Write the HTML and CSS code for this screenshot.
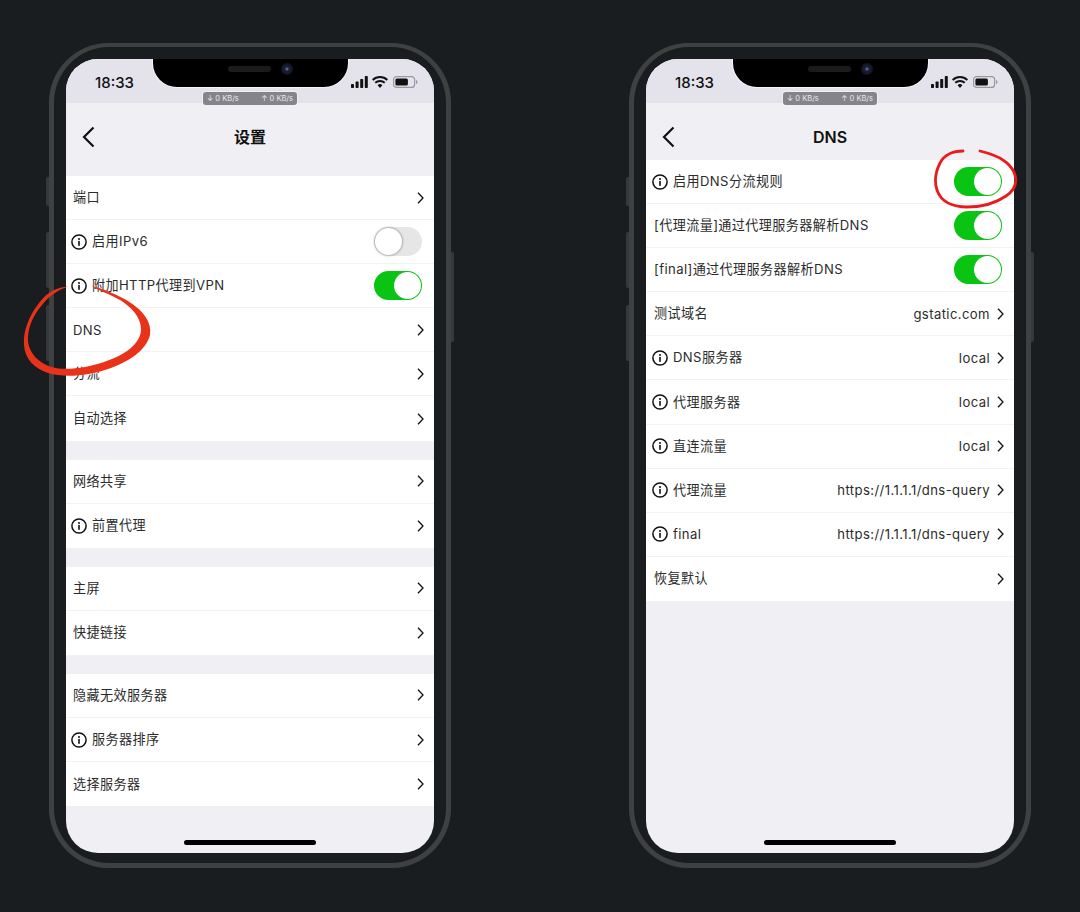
FILE: index.html
```html
<!DOCTYPE html>
<html lang="zh-CN">
<head>
  <meta charset="utf-8" />
  <meta name="viewport" content="width=device-width, initial-scale=1"/>
  <title>设置 / DNS</title>
  <link rel="stylesheet" href="styles.css">
</head>
<body>
  <svg class="defs" width="0" height="0">
    <symbol id="chev" viewBox="0 0 7 12"><path d="M1 .8l5 5.2-5 5.2" fill="none" stroke="#111" stroke-width="1.3"/></symbol>
    <symbol id="back" viewBox="0 0 13 22"><path d="M11.5 1.5L2 11l9.5 9.5" fill="none" stroke="#111" stroke-width="2.2"/></symbol>
    <symbol id="info" viewBox="0 0 16 16">
      <circle cx="8" cy="8" r="7.1" fill="none" stroke="#111" stroke-width="1.5"/>
      <rect x="7.2" y="6.9" width="1.6" height="4.9" fill="#111"/>
      <circle cx="8" cy="4.9" r="1" fill="#111"/>
    </symbol>
    <symbol id="signal" viewBox="0 0 17 12">
      <rect x="0" y="8" width="3" height="4" rx=".7"/><rect x="4.6" y="5.5" width="3" height="6.5" rx=".7"/>
      <rect x="9.2" y="3" width="3" height="9" rx=".7"/><rect x="13.8" y="0" width="3" height="12" rx=".7"/>
    </symbol>
    <symbol id="wifi" viewBox="0 0 16 12">
      <path d="M8 12L5.6 9.3a3.4 3.4 0 0 1 4.8 0zM3.9 7.6L2.6 6.1a7.8 7.8 0 0 1 10.8 0l-1.3 1.5a5.9 5.9 0 0 0-8.2 0zM1.3 4.7L0 3.2a11.7 11.7 0 0 1 16 0l-1.3 1.5a9.8 9.8 0 0 0-13.4 0z"/>
    </symbol>
    <symbol id="battery" viewBox="0 0 25 12">
      <rect x=".6" y=".6" width="21" height="10.8" rx="3" fill="none" stroke="#9a9a9e" stroke-width="1.2"/>
      <rect x="2.4" y="2.4" width="12.5" height="7.2" rx="1.5"/>
      <path d="M23 4v4c.9-.3 1.5-1.1 1.5-2s-.6-1.7-1.5-2z" fill="#9a9a9e"/>
    </symbol>
  </svg>

  <section class="phone">
    <span class="side-btn mute"></span><span class="side-btn vol-up"></span><span class="side-btn vol-down"></span><span class="side-btn power"></span>
    <div class="screen">
      <div class="notch"><span class="speaker"></span><span class="camera"></span></div>
      <div class="speed"><span>↓ 0 KB/s</span><span>↑ 0 KB/s</span></div>
      <header class="status">
        <span class="clock">18:33</span>
        <span class="status-icons">
          <svg class="ic-signal"><use href="#signal"/></svg>
          <svg class="ic-wifi"><use href="#wifi"/></svg>
          <svg class="ic-battery"><use href="#battery"/></svg>
        </span>
      </header>
      <nav class="nav">
        <svg class="ic-back"><use href="#back"/></svg>
        <h1 class="title-cjk">设置</h1>
      </nav>
      <div class="groups first-gap">
        <ul class="group">
          <li class="row"><span class="label">端口</span><svg class="ic-chev"><use href="#chev"/></svg></li>
          <li class="row"><svg class="ic-info"><use href="#info"/></svg><span class="label">启用IPv6</span><i class="toggle"></i></li>
          <li class="row"><svg class="ic-info"><use href="#info"/></svg><span class="label">附加HTTP代理到VPN</span><i class="toggle on"></i></li>
          <li class="row"><span class="label latin">DNS</span><svg class="ic-chev"><use href="#chev"/></svg></li>
          <li class="row"><span class="label">分流</span><svg class="ic-chev"><use href="#chev"/></svg></li>
          <li class="row"><span class="label">自动选择</span><svg class="ic-chev"><use href="#chev"/></svg></li>
        </ul>
        <ul class="group">
          <li class="row"><span class="label">网络共享</span><svg class="ic-chev"><use href="#chev"/></svg></li>
          <li class="row"><svg class="ic-info"><use href="#info"/></svg><span class="label">前置代理</span><svg class="ic-chev"><use href="#chev"/></svg></li>
        </ul>
        <ul class="group">
          <li class="row"><span class="label">主屏</span><svg class="ic-chev"><use href="#chev"/></svg></li>
          <li class="row"><span class="label">快捷链接</span><svg class="ic-chev"><use href="#chev"/></svg></li>
        </ul>
        <ul class="group">
          <li class="row"><span class="label">隐藏无效服务器</span><svg class="ic-chev"><use href="#chev"/></svg></li>
          <li class="row"><svg class="ic-info"><use href="#info"/></svg><span class="label">服务器排序</span><svg class="ic-chev"><use href="#chev"/></svg></li>
          <li class="row"><span class="label">选择服务器</span><svg class="ic-chev"><use href="#chev"/></svg></li>
        </ul>
      </div>
      <span class="home-bar"></span>
    </div>
  </section>

  <section class="phone">
    <span class="side-btn mute"></span><span class="side-btn vol-up"></span><span class="side-btn vol-down"></span><span class="side-btn power"></span>
    <div class="screen">
      <div class="notch"><span class="speaker"></span><span class="camera"></span></div>
      <div class="speed"><span>↓ 0 KB/s</span><span>↑ 0 KB/s</span></div>
      <header class="status">
        <span class="clock">18:33</span>
        <span class="status-icons">
          <svg class="ic-signal"><use href="#signal"/></svg>
          <svg class="ic-wifi"><use href="#wifi"/></svg>
          <svg class="ic-battery"><use href="#battery"/></svg>
        </span>
      </header>
      <nav class="nav">
        <svg class="ic-back"><use href="#back"/></svg>
        <h1>DNS</h1>
      </nav>
      <div class="groups dns">
        <ul class="group">
          <li class="row"><svg class="ic-info"><use href="#info"/></svg><span class="label">启用DNS分流规则</span><i class="toggle on"></i></li>
          <li class="row"><span class="label">[代理流量]通过代理服务器解析DNS</span><i class="toggle on"></i></li>
          <li class="row"><span class="label">[final]通过代理服务器解析DNS</span><i class="toggle on"></i></li>
          <li class="row"><span class="label">测试域名</span><span class="value">gstatic.com</span><svg class="ic-chev"><use href="#chev"/></svg></li>
          <li class="row"><svg class="ic-info"><use href="#info"/></svg><span class="label">DNS服务器</span><span class="value">local</span><svg class="ic-chev"><use href="#chev"/></svg></li>
          <li class="row"><svg class="ic-info"><use href="#info"/></svg><span class="label">代理服务器</span><span class="value">local</span><svg class="ic-chev"><use href="#chev"/></svg></li>
          <li class="row"><svg class="ic-info"><use href="#info"/></svg><span class="label">直连流量</span><span class="value">local</span><svg class="ic-chev"><use href="#chev"/></svg></li>
          <li class="row"><svg class="ic-info"><use href="#info"/></svg><span class="label">代理流量</span><span class="value">https://1.1.1.1/dns-query</span><svg class="ic-chev"><use href="#chev"/></svg></li>
          <li class="row"><svg class="ic-info"><use href="#info"/></svg><span class="label latin">final</span><span class="value">https://1.1.1.1/dns-query</span><svg class="ic-chev"><use href="#chev"/></svg></li>
          <li class="row"><span class="label">恢复默认</span><svg class="ic-chev"><use href="#chev"/></svg></li>
        </ul>
      </div>
      <span class="home-bar"></span>
    </div>
  </section>

  <!-- red pen marks over both phones -->
  <svg class="marks" viewBox="0 0 1080 912">
    <path fill="#e8321a" d="M68 286.5C58 287 47 292 39 303C29 316 23 331 24 345C25 359 34 368 48 373C64 378 88 376 108 369C128 362 146 351 150 335C152 322 143 311 131 303C119 295 104 289 92 286C95 289 107 293 118 299C131 306 142 318 141 331C139 346 122 356 104 362C86 368 66 371 51 367C38 362 30 354 28 342C27 329 33 315 42 305C49 296 58 290 68 286.5Z"/>
    <path fill="none" stroke="#e81c1c" stroke-width="2.8" stroke-linecap="round" d="M963 151C953 151 944 155 940 163C936 171 934 181 937 190C941 202 953 207 967 207C981 207 996 203 1006 196C1015 190 1017 182 1015 175C1012 165 1002 158 993 155C988 153 984 152 980 151"/>
  </svg>
</body>
</html>
```

FILE: styles.css
```css
* {
  box-sizing: border-box;
}
body {
  margin: 0;
  width: 1080px;
  height: 912px;
  overflow: hidden;
  background-color: #1a1d20;
  display: flex;
  gap: 178px;
  padding: 43px 0 0 49px;
  font-family: Inter, "Noto Sans CJK SC", sans-serif;
  color: #2b2b2b;
}
.defs {
  position: absolute;
}
.marks {
  position: absolute;
  left: 0;
  top: 0;
  width: 1080px;
  height: 912px;
  pointer-events: none;
}

/* phone body */
.phone {
  position: relative;
  width: 402px;
  height: 825px;
  flex: none;
  padding: 12px 12px 10px;
  border: 5px solid #3f4042;
  border-top-width: 4px;
  border-radius: 60px;
  background-color: #1a1d20;
  box-shadow: inset 0 0 2px #1a1d20, 0 0 1px #2c2e30;
}
.side-btn {
  position: absolute;
  left: -8px;
  width: 3px;
  background-color: #36383a;
  border-radius: 2px 0 0 2px;
}
.mute { top: 130px; height: 29px; }
.vol-up { top: 185px; height: 56px; }
.vol-down { top: 258px; height: 56px; }
.power {
  left: auto;
  right: -8px;
  top: 205px;
  height: 90px;
  border-radius: 0 2px 2px 0;
}
.screen {
  position: relative;
  width: 368px;
  height: 794px;
  overflow: hidden;
  border-radius: 32px;
  background-color: #efeff4;
}

/* status bar */
.status {
  height: 44px;
  background-color: #e4e3ec;
  display: flex;
  justify-content: space-between;
  align-items: center;
  padding: 2px 16px 0 29px;
}
.clock {
  font-size: 15px;
  font-weight: 500;
  color: #111;
  margin-top: 1px;
}
.status-icons {
  display: flex;
  align-items: center;
  gap: 4px;
}
.status-icons svg {
  fill: #111;
}
.ic-signal { width: 17px; height: 12px; }
.ic-wifi { width: 16px; height: 12px; }
.ic-battery { width: 25px; height: 12px; margin-left: 1px; }

.notch {
  position: absolute;
  z-index: 2;
  left: 87px;
  top: -1px;
  width: 195px;
  height: 29px;
  background-color: #000;
  border-radius: 0 0 24px 24px;
  box-shadow: 0 0 0 1px #f4f4f8;
}
.speaker {
  position: absolute;
  left: 75px;
  top: 8px;
  width: 43px;
  height: 6px;
  border-radius: 3px;
  background-color: #1b1b1d;
}
.camera {
  position: absolute;
  left: 128px;
  top: 5px;
  width: 12px;
  height: 12px;
  border-radius: 50%;
  background: radial-gradient(circle, #7d7fd0 0, #1b2138 25%, #10131c 70%);
}
.speed {
  position: absolute;
  z-index: 2;
  left: 137px;
  top: 33px;
  width: 94px;
  height: 13px;
  display: flex;
  justify-content: space-between;
  align-items: center;
  padding: 0 4px;
  background-color: #84848a;
  border-radius: 3px;
  box-shadow: 0 0 0 1px #f0f0f4;
  color: #e8e8ec;
  font-size: 7.5px;
  white-space: nowrap;
}

/* nav */
.nav {
  position: relative;
  height: 57px;
  display: flex;
  justify-content: center;
  align-items: center;
  padding-top: 10px;
}
.nav h1 {
  margin: 0;
  font-size: 16px;
  font-weight: 600;
  color: #111;
}
.nav .title-cjk {
  margin-bottom: 2px;
}
.ic-back {
  position: absolute;
  left: 16px;
  top: 23px;
  width: 13px;
  height: 22px;
}

/* list */
.groups {
  display: flex;
  flex-direction: column;
  gap: 19px;
}
.first-gap {
  margin-top: 16px;
}
.group {
  list-style: none;
  margin: 0;
  padding: 0;
  background-color: #fff;
}
.row {
  height: 44.1px;
  display: flex;
  align-items: center;
  padding: 0 10px 0 7px;
  font-size: 13.1px;
  letter-spacing: 0.4px;
  border-bottom: 1.5px solid #f3f3f6;
  white-space: nowrap;
}
.dns .row {
  padding-left: 8px;
}
.row:last-child {
  border-bottom: none;
}
.label {
  flex: 1;
  padding-bottom: 2px;
}
.label.latin {
  padding-bottom: 0;
}
.value {
  margin-right: 7px;
}
.ic-info {
  width: 16px;
  height: 16px;
  margin: 0 5px 0 -2px;
  flex: none;
}
.ic-chev {
  width: 7px;
  height: 12px;
  flex: none;
}

/* toggle */
.toggle {
  position: relative;
  width: 48px;
  height: 29px;
  margin: 0 2px 0 auto;
  border-radius: 15px;
  background-color: #e6e6e6;
  flex: none;
}
.toggle::after {
  content: "";
  position: absolute;
  left: 1px;
  top: 1px;
  width: 27px;
  height: 27px;
  border-radius: 50%;
  background-color: #fff;
  box-shadow: 0 0 2px 1px rgba(0, 0, 0, 0.25);
}
.toggle.on {
  background-color: #0ac414;
}
.toggle.on::after {
  left: 20px;
  box-shadow: none;
}

.home-bar {
  position: absolute;
  left: 118px;
  bottom: 8px;
  width: 132px;
  height: 5px;
  border-radius: 3px;
  background-color: #000;
}
```
